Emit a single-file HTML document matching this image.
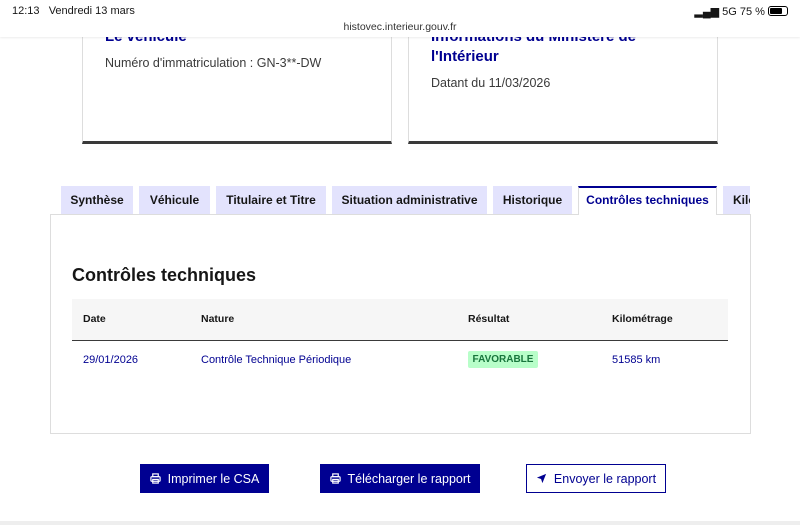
<!DOCTYPE html>
<html><head><meta charset="utf-8"><style>
*{box-sizing:border-box;margin:0;padding:0}
body{width:800px;height:525px;overflow:hidden;background:#fff;font-family:"Liberation Sans",sans-serif;color:#161616;position:relative}
.abs{position:absolute}
.card{position:absolute;top:20px;height:124px;border:1px solid #ddd;border-bottom:3px solid #3a3a3a;background:#fff}
.card h3{color:#000091;font-size:15px;font-weight:bold;line-height:20px}
.card p{font-size:12.5px;color:#3a3a3a}
.tab{position:absolute;top:186px;height:28px;background:#e3e3fd;font-size:12px;font-weight:bold;color:#161616;display:flex;align-items:center;justify-content:center;white-space:nowrap;overflow:hidden}
.btn{position:absolute;top:464px;height:29px;background:#000091;color:#fff;font-size:12.5px;display:flex;align-items:center;justify-content:center;gap:7px}
</style></head><body>
<div class="card" style="left:82px;width:310px"><h3 class="abs" style="left:22px;top:6px">Le véhicule</h3><p class="abs" style="left:22px;top:35px">Numéro d'immatriculation : GN-3**-DW</p></div>
<div class="card" style="left:408px;width:310px"><h3 class="abs" style="left:22px;top:6px;width:260px">Informations du Ministère de l'Intérieur</h3><p class="abs" style="left:22px;top:55px">Datant du 11/03/2026</p></div>
<div class="abs" style="left:0;top:0;width:800px;height:37px;background:#fff;box-shadow:0 1px 2px rgba(0,0,0,.08)">
<div class="abs" style="left:12px;top:5px;font-size:11px">12:13&nbsp;&nbsp; Vendredi 13 mars</div>
<div class="abs" style="left:0;width:800px;top:21px;font-size:10.5px;text-align:center;color:#333">histovec.interieur.gouv.fr</div>
<div class="abs" style="right:12px;top:5px;font-size:11px">▂▄▆ 5G 75 % <span style="display:inline-block;width:20px;height:10px;border:1px solid #000;border-radius:3px;vertical-align:-1px;padding:1px"><span style="display:block;width:12px;height:6px;background:#000;border-radius:1px"></span></span></div>
</div>
<div class="abs" style="left:50px;top:214px;width:701px;height:220px;border:1px solid #ddd"></div>
<div class="tab" style="left:61px;width:72px">Synthèse</div>
<div class="tab" style="left:139px;width:71px">Véhicule</div>
<div class="tab" style="left:216px;width:110px">Titulaire et Titre</div>
<div class="tab" style="left:332px;width:155px">Situation administrative</div>
<div class="tab" style="left:493px;width:79px">Historique</div>
<div class="tab" style="left:578px;width:139px;background:#fff;color:#000091;border-top:2px solid #000091;border-left:1px solid #ddd;border-right:1px solid #ddd;height:29px;padding-bottom:3px">Contrôles techniques</div>
<div class="tab" style="left:723px;width:27px;justify-content:flex-start;padding-left:10px">Kilo</div>
<div class="abs" style="left:72px;top:265px;font-size:18px;font-weight:bold;color:#161616">Contrôles techniques</div>
<div class="abs" style="left:72px;top:299px;width:656px;height:42px;background:#f6f6f6;border-bottom:1px solid #3a3a3a"></div>
<div class="abs" style="top:313px;left:83px;font-size:10.5px;font-weight:bold">Date</div>
<div class="abs" style="top:313px;left:201px;font-size:10.5px;font-weight:bold">Nature</div>
<div class="abs" style="top:313px;left:468px;font-size:10.5px;font-weight:bold">Résultat</div>
<div class="abs" style="top:313px;left:612px;font-size:10.5px;font-weight:bold">Kilométrage</div>
<div class="abs" style="top:354px;left:83px;font-size:11px;color:#000091">29/01/2026</div>
<div class="abs" style="top:354px;left:201px;font-size:11px;color:#000091">Contrôle Technique Périodique</div>
<div class="abs" style="top:351px;left:468px;width:70px;height:17px;background:#b8fec9;color:#18753c;font-size:10px;font-weight:bold;display:flex;align-items:center;justify-content:center;border-radius:2px">FAVORABLE</div>
<div class="abs" style="top:354px;left:612px;font-size:11px;color:#000091">51585 km</div>
<div class="btn" style="left:140px;width:129px"><svg width="11" height="11" viewBox="0 0 12 12" fill="none" stroke="#fff" stroke-width="1.3"><rect x="3" y="1" width="6" height="3"/><rect x="1" y="4" width="10" height="5" rx="1"/><rect x="3" y="7" width="6" height="4"/></svg>Imprimer le CSA</div>
<div class="btn" style="left:320px;width:160px"><svg width="11" height="11" viewBox="0 0 12 12" fill="none" stroke="#fff" stroke-width="1.3"><rect x="3" y="1" width="6" height="3"/><rect x="1" y="4" width="10" height="5" rx="1"/><rect x="3" y="7" width="6" height="4"/></svg>Télécharger le rapport</div>
<div class="btn" style="left:526px;width:140px;background:#fff;color:#000091;border:1px solid #000091"><svg width="11" height="11" viewBox="0 0 12 12"><path d="M11 1 L1 5 L5.5 6.5 L7 11 Z" fill="#000091"/></svg>Envoyer le rapport</div>
<div class="abs" style="left:0;top:521px;width:800px;height:4px;background:#eee"></div>
</body></html>
